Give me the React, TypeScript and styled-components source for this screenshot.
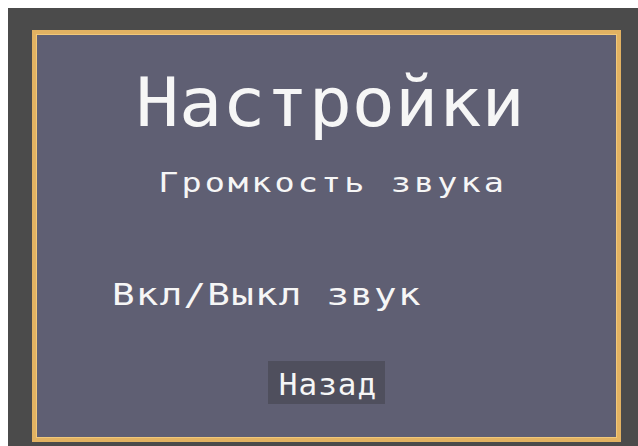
import React from "react";
import styled, { createGlobalStyle } from "styled-components";

const GlobalStyle = createGlobalStyle`
  html, body {
    margin: 0;
    padding: 0;
    background: #ffffff;
    overflow: hidden;
  }
  body {
    padding: 8px 0 0 8px;
  }
`;

const Stage = styled.div`
  width: 630px;
  height: 438px;
  background: #4b4b4b;
  padding: 22px 0 0 24px;
  box-sizing: border-box;
  overflow: hidden;
`;

const Panel = styled.div`
  width: 589px;
  height: 412px;
  box-sizing: border-box;
  background: #5f5f73;
  border: 4px solid #e2b262;
  box-shadow: inset 0 0 0 1px #f1c87a;
  display: flex;
  flex-direction: column;
  font-family: "DejaVu Sans Mono", "Liberation Mono", monospace;
  color: #f6f6f6;
`;

/* The menu font is drawn a little wider than the stock glyphs, so each
   line gets its own horizontal stretch. */
const Line = styled.div<{
  $size: number;
  $spacing: number;
  $top: number;
  $stretch: number;
  $left?: number;
  $shift?: number;
}>`
  font-size: ${(p) => p.$size}px;
  letter-spacing: ${(p) => p.$spacing}px;
  line-height: 1;
  margin-top: ${(p) => p.$top}px;
  white-space: nowrap;
  transform: scaleX(${(p) => p.$stretch});
  ${(p) =>
    p.$left === undefined
      ? `align-self: center; transform-origin: center; margin-left: ${p.$shift ?? 0}px;`
      : `align-self: flex-start; transform-origin: left center; margin-left: ${p.$left}px;`}
`;

const BackButton = styled.button`
  align-self: center;
  margin-top: 51px;
  padding: 8px 8px 4px 11px;
  border: none;
  background: #4f4f5d;
  color: #f6f6f6;
  font-family: "DejaVu Sans Mono", "Liberation Mono", monospace;
  font-size: 31px;
  letter-spacing: 1px;
  line-height: 1;
  cursor: pointer;
`;

export default function App() {
  return (
    <>
      <GlobalStyle />
      <Stage>
        <Panel>
          <Line $size={68} $spacing={0} $top={35} $stretch={1.055} $shift={8}>
            Настройки
          </Line>
          <Line $size={27} $spacing={2.5} $top={32} $stretch={1.24} $shift={12}>
            Громкость звука
          </Line>
          <Line $size={30} $spacing={1} $top={84} $stretch={1.25} $left={76}>
            Вкл/Выкл звук
          </Line>
          <BackButton>Назад</BackButton>
        </Panel>
      </Stage>
    </>
  );
}
